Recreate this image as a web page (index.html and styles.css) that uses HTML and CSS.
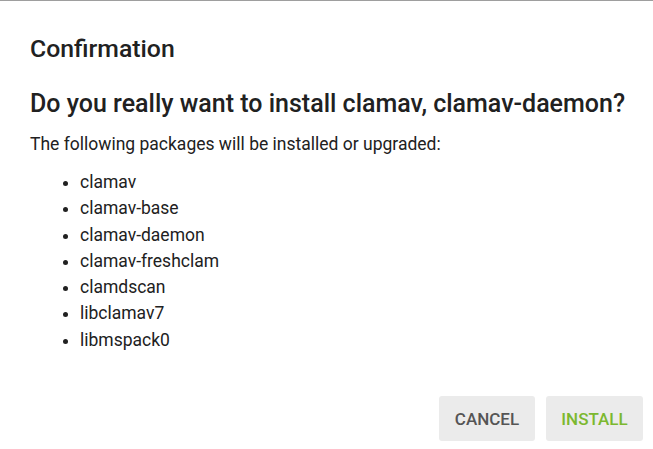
FILE: index.html
```html
<!DOCTYPE html>
<html>
<head>
<meta charset="utf-8">
<link rel="stylesheet" href="styles.css">
</head>
<body>
<div class="dialog">
  <div class="content">
    <h2 class="title">Confirmation</h2>
    <h1 class="question">Do you really want to install clamav, clamav-daemon?</h1>
    <p class="intro">The following packages will be installed or upgraded:</p>
    <ul class="pkgs">
      <li>clamav</li>
      <li>clamav-base</li>
      <li>clamav-daemon</li>
      <li>clamav-freshclam</li>
      <li>clamdscan</li>
      <li>libclamav7</li>
      <li>libmspack0</li>
    </ul>
  </div>
  <div class="actions">
    <button class="btn btn-cancel">CANCEL</button>
    <button class="btn btn-install">INSTALL</button>
  </div>
</div>
</body>
</html>
```
FILE: styles.css
```css
html, body {
  margin: 0;
  padding: 0;
  background: #ffffff;
}
body {
  font-family: Roboto, "Liberation Sans", sans-serif;
  color: #212121;
  width: 653px;
  height: 449px;
  overflow: hidden;
}
.dialog {
  border-top: 1px solid #9e9e9e;
  height: 448px;
  display: flex;
  flex-direction: column;
}
.content {
  padding: 0 30px;
  flex: 1;
}
.title {
  margin: 33px 0 0;
  font-size: 24.8px;
  font-weight: 500;
  line-height: 30px;
}
.question {
  margin: 25px 0 0;
  font-size: 25px;
  font-weight: 500;
  line-height: 30px;
  white-space: nowrap;
}
.intro {
  margin: 13px 0 0;
  font-size: 17.5px;
  line-height: 24px;
}
.pkgs {
  margin: 13px 0 0;
  padding-left: 50px;
  font-size: 17.5px;
  line-height: 26.3px;
}
.actions {
  display: flex;
  justify-content: flex-end;
  gap: 11px;
  padding: 0 10px 8px 0;
}
.btn {
  border: none;
  border-radius: 3px;
  background: #ebebeb;
  font-family: Roboto, "Liberation Sans", sans-serif;
  font-size: 17px;
  font-weight: 500;
  height: 45px;
  padding: 0 14px;
}
.btn-cancel { color: #555555; width: 96px; }
.btn-install { color: #7cb82f; width: 97px; }
```
